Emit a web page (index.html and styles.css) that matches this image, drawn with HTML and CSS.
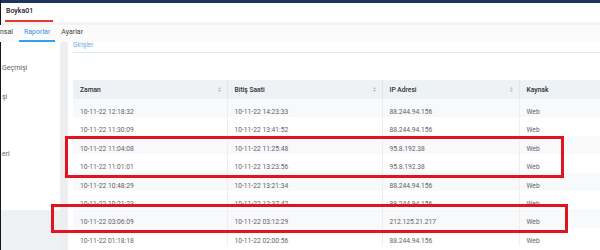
FILE: index.html
```html
<!DOCTYPE html>
<html lang="tr">
<head>
    <meta charset="UTF-8">
    <title>Boyka01 - Raporlar</title>
    <link rel="stylesheet" href="styles.css">
</head>
<body>
    <div class="page">
        <div class="topbar"></div>
        <div class="header">
            <span class="user-tab">Boyka01</span>
        </div>
        <div class="tabs">
            <div class="tab">nsal</div>
            <div class="tab active">Raporlar</div>
            <div class="tab">Ayarlar</div>
        </div>
        <div class="content">
            <div class="sidebar">
                <div class="side-list">
                    <div class="side-item">Geçmişi</div>
                    <div class="side-item">şi</div>
                    <div class="side-item"></div>
                    <div class="side-item">eri</div>
                    <div class="side-item"></div>
                </div>
                <div class="side-footer"></div>
            </div>
            <div class="gutter"></div>
            <div class="main">
                <div class="subtabs">
                    <span class="subtab">Girişler</span>
                </div>
                <table class="log-table">
                    <colgroup>
                        <col class="col-time">
                        <col class="col-end">
                        <col class="col-ip">
                        <col class="col-src">
                    </colgroup>
                    <thead>
                        <tr>
                            <th>Zaman <span class="sort"><svg width="3" height="5" viewBox="0 0 3 5"><path d="M1.5 0L3 2H0z M1.5 5L3 3H0z" fill="#b9bec5"/></svg></span></th>
                            <th>Bitiş Saati <span class="sort"><svg width="3" height="5" viewBox="0 0 3 5"><path d="M1.5 0L3 2H0z M1.5 5L3 3H0z" fill="#b9bec5"/></svg></span></th>
                            <th>IP Adresi <span class="sort"><svg width="3" height="5" viewBox="0 0 3 5"><path d="M1.5 0L3 2H0z M1.5 5L3 3H0z" fill="#b9bec5"/></svg></span></th>
                            <th>Kaynak</th>
                        </tr>
                    </thead>
                    <tbody>
                        <tr><td>10-11-22 12:18:32</td><td>10-11-22 14:23:33</td><td>88.244.94.156</td><td>Web</td></tr>
                        <tr><td>10-11-22 11:30:09</td><td>10-11-22 13:41:52</td><td>88.244.94.156</td><td>Web</td></tr>
                        <tr><td>10-11-22 11:04:08</td><td>10-11-22 11:25:48</td><td>95.8.192.38</td><td>Web</td></tr>
                        <tr><td>10-11-22 11:01:01</td><td>10-11-22 13:23:56</td><td>95.8.192.38</td><td>Web</td></tr>
                        <tr><td>10-11-22 10:48:29</td><td>10-11-22 13:21:34</td><td>88.244.94.156</td><td>Web</td></tr>
                        <tr><td>10-11-22 10:21:23</td><td>10-11-22 12:37:42</td><td>88.244.94.156</td><td>Web</td></tr>
                        <tr><td>10-11-22 03:06:09</td><td>10-11-22 03:12:29</td><td>212.125.21.217</td><td>Web</td></tr>
                        <tr><td>10-11-22 01:18:18</td><td>10-11-22 02:00:56</td><td>88.244.94.156</td><td>Web</td></tr>
                    </tbody>
                </table>
            </div>
        </div>
    </div>

    <!-- annotation boxes drawn over the screenshot -->
    <div class="mark mark-one"></div>
    <div class="mark mark-two"></div>
</body>
</html>
```

FILE: styles.css
```css
body {
    margin: 0;
    font-family: Roboto, "Liberation Sans", sans-serif;
    background: #ffffff;
    color: #333;
    width: 600px;
    height: 250px;
    overflow: hidden;
    position: relative;
}

.page {
    display: flex;
    flex-direction: column;
    height: 250px;
    border-left: 1px solid #15171c;
}

.topbar {
    height: 3px;
    background: #1d355c;
}

.header {
    height: 19px;
    background: #fff;
    padding-left: 4px;
    display: flex;
    align-items: flex-end;
    border-bottom: 3px solid #f3f3f3;
}

.user-tab {
    font-size: 7px;
    font-weight: 500;
    color: #222;
    padding: 0 0 4px 1px;
    width: 47px;
    border-bottom: 2px solid #e53935;
    line-height: 9px;
}

.tabs {
    height: 17px;
    background: #fbfbfb;
    display: flex;
    margin-left: -1px;
}

.tab {
    font-size: 7px;
    color: #444;
    padding: 0 5px;
    line-height: 15px;
    border-bottom: 2px solid transparent;
}

.tab:first-child {
    padding-left: 0;
    margin-right: 1px;
}

.tab.active {
    color: #3b8fe3;
    border-bottom-color: #2ea3f2;
    padding: 0 5px;
    margin-right: 1px;
}

.content {
    flex: 1;
    display: flex;
    min-height: 0;
}

.sidebar {
    width: 59px;
    display: flex;
    flex-direction: column;
    background: #fff;
    overflow: hidden;
}

.side-list {
    padding-top: 12px;
}

.side-item {
    height: 28.5px;
    line-height: 28.5px;
    font-size: 7px;
    color: #606368;
    padding-left: 1px;
    white-space: nowrap;
}

.side-footer {
    flex: 1;
    margin-top: 13px;
    background: #eff0f4;
}

.gutter {
    width: 8px;
    background: #eceef1;
}

.main {
    flex: 1;
    padding-left: 5px;
    overflow: hidden;
    background: #fff;
}

.subtabs {
    height: 10px;
    border-bottom: 1px solid #d5ecf8;
}

.subtab {
    font-size: 6.5px;
    color: #6fa2e6;
    line-height: 7px;
    display: inline-block;
    vertical-align: top;
}

.log-table {
    margin-top: 27px;
    width: 532px;
    table-layout: fixed;
    border-collapse: collapse;
    font-size: 6.7px;
}

.col-time { width: 154px; }
.col-end { width: 155px; }
.col-ip { width: 137px; }

.log-table th {
    background: #eef2f5;
    height: 18px;
    padding: 1px 7px 0;
    text-align: left;
    font-weight: 500;
    color: #2d2f33;
    border-right: 1px solid #e2e6ea;
    position: relative;
}

.sort {
    position: absolute;
    right: 6px;
    top: 7px;
    line-height: 0;
}

.log-table td {
    height: 18.4px;
    box-sizing: border-box;
    padding: 9px 7px 1.4px;
    line-height: 8px;
    color: #5f6267;
    border-right: 1px solid #eceef1;
    white-space: nowrap;
}

.log-table tbody tr:nth-child(odd) {
    background: #f8f9fa;
}

.mark {
    position: absolute;
    border: 3px solid #e3141e;
    box-sizing: border-box;
}

.mark-one {
    left: 65px;
    top: 136px;
    width: 499px;
    height: 42px;
}

.mark-two {
    left: 51px;
    top: 204px;
    width: 517px;
    height: 29px;
}
```
